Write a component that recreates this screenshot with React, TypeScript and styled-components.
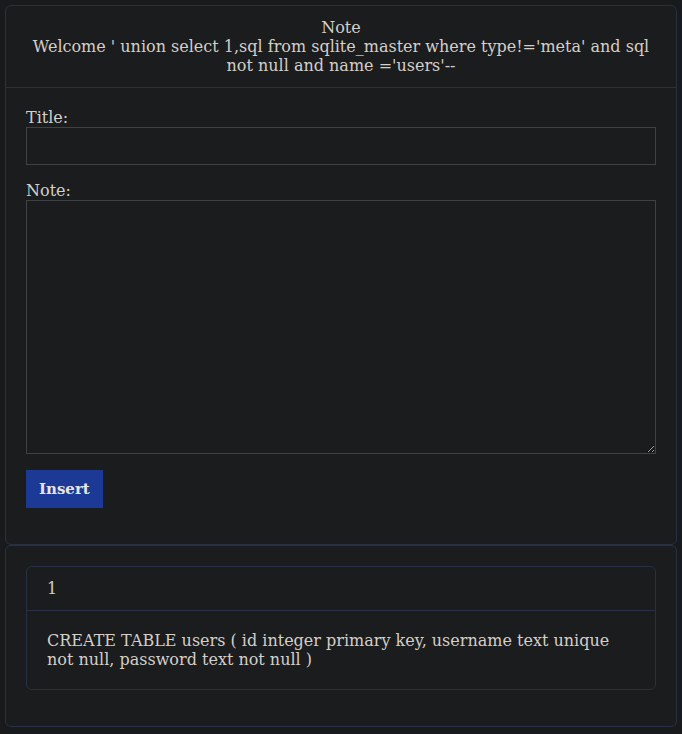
import React from "react";
import styled, { createGlobalStyle } from "styled-components";

const Global = createGlobalStyle`
  html, body { margin: 0; padding: 0; background: #181a1b; }
  body {
    font-family: "DejaVu Serif", serif;
    font-size: 16px;
    color: #d3cfc9;
  }
  * { box-sizing: border-box; }
`;

const Page = styled.div`
  padding: 5px 5px 0 5px;
  display: flex;
  flex-direction: column;
`;

const Card = styled.div<{ $mb?: number }>`
  background: #1b1c1e;
  border: 1px solid #283046;
  border-radius: 6px;
  margin-bottom: ${(p) => p.$mb ?? 0}px;
  display: flex;
  flex-direction: column;
`;

const CardHeader = styled.div<{ $center?: boolean }>`
  padding: 12px 20px;
  border-bottom: 1px solid #283046;
  text-align: ${(p) => (p.$center ? "center" : "left")};
  line-height: 19px;
`;

const CardBody = styled.div`
  padding: 20px;
  line-height: 19px;
`;

const Form = styled.form`
  margin-bottom: 16px;
  display: flex;
  flex-direction: column;
`;

const Group = styled.div`
  margin-bottom: 16px;
  display: flex;
  flex-direction: column;
`;

const Label = styled.label`
  line-height: 19px;
`;

const Input = styled.input`
  height: 38px;
  background: #1b1c1e;
  border: 1px solid #3e4244;
  color: #d3cfc9;
  font: inherit;
  outline: none;
`;

const TextArea = styled.textarea`
  height: 254px;
  background: #1b1c1e;
  border: 1px solid #3e4244;
  color: #d3cfc9;
  font: inherit;
  outline: none;
`;

const Button = styled.button`
  align-self: flex-start;
  height: 38px;
  padding: 0 13px;
  background: #1c3996;
  border: none;
  color: #e8e6e3;
  font-family: "DejaVu Serif", serif;
  font-weight: bold;
  font-size: 15px;
`;

const InnerCard = styled(Card)`
  margin-bottom: 16px;
`;

export default function App() {
  return (
    <>
      <Global />
      <Page>
        <Card>
          <CardHeader $center>
            Note
            <br />
            Welcome ' union select 1,sql from sqlite_master where type!='meta' and sql not null and name ='users'--
          </CardHeader>
          <CardBody>
            <Form onSubmit={(e) => e.preventDefault()}>
              <Group>
                <Label>Title:</Label>
                <Input type="text" />
              </Group>
              <Group>
                <Label>Note:</Label>
                <TextArea />
              </Group>
              <Button type="submit">Insert</Button>
            </Form>
          </CardBody>
        </Card>
        <Card>
          <CardBody>
            <InnerCard>
              <CardHeader>1</CardHeader>
              <CardBody>
                CREATE TABLE users ( id integer primary key, username text unique not null, password text not null )
              </CardBody>
            </InnerCard>
          </CardBody>
        </Card>
      </Page>
    </>
  );
}
